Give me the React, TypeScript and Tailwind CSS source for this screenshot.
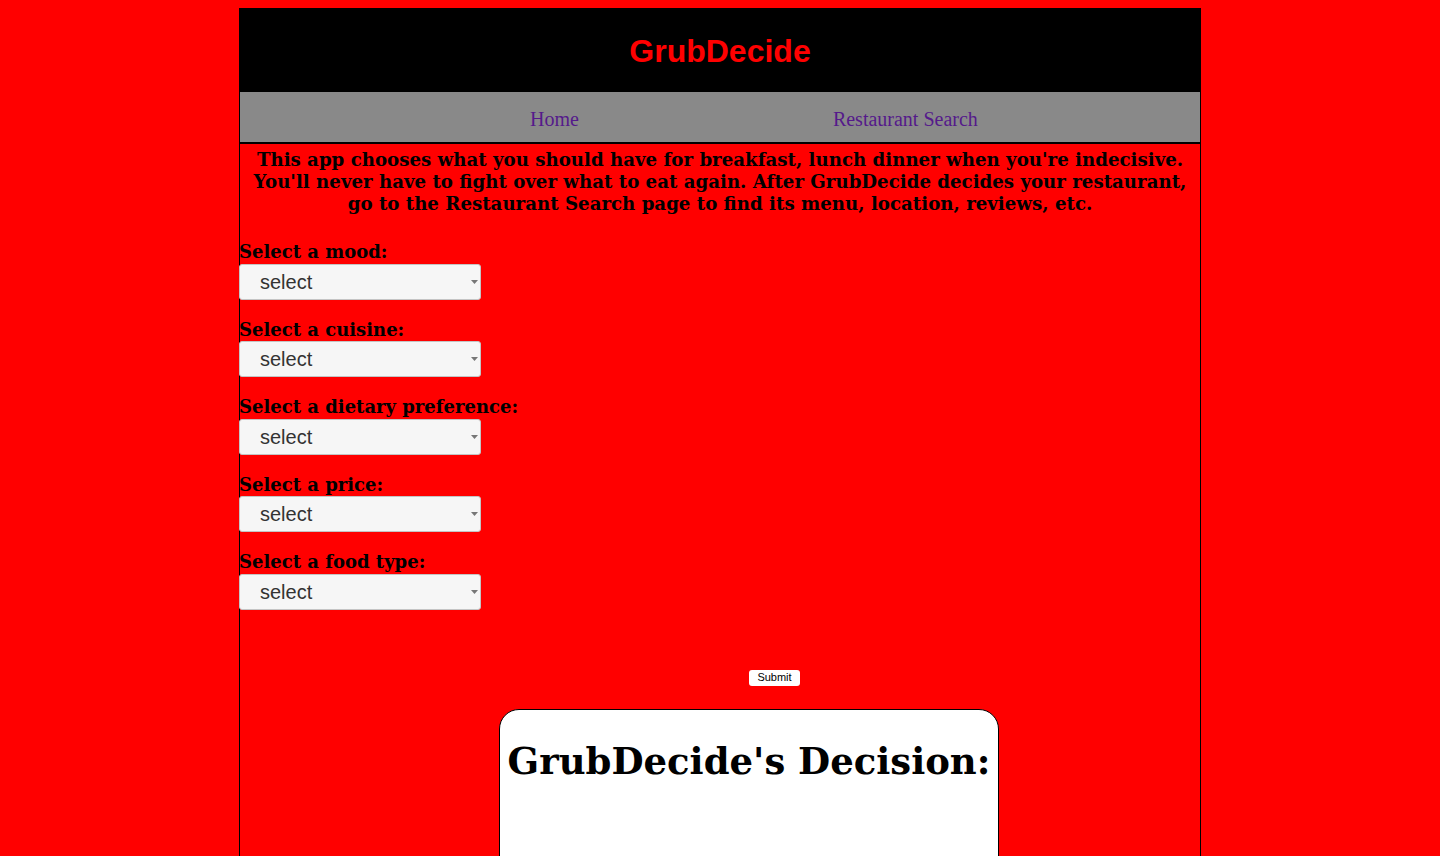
import { useState } from "react";

/* ───────────────── Data ───────────────── */

const fields = [
  { id: "mood", label: "Select a mood:" },
  { id: "cuisine", label: "Select a cuisine:" },
  { id: "diet", label: "Select a dietary preference:" },
  { id: "price", label: "Select a price:" },
  { id: "type", label: "Select a food type:" },
];

const serif = "font-['Liberation_Serif','Times_New_Roman',serif]";
const bold = "font-['DejaVu_Serif',Georgia,serif]";
const sans = "font-['Liberation_Sans',Arial,sans-serif]";

/* ───────────────── Pieces ───────────────── */

function Dropdown({ id }: { id: string }) {
  const [value, setValue] = useState("select");

  return (
    <div className="relative w-[242px] h-[36px]">
      <select
        id={id}
        value={value}
        onChange={(e) => setValue(e.target.value)}
        className={`${sans} appearance-none w-full h-full rounded-[3px] border border-[#c4c4c4] bg-[#f6f6f6] pl-[20px] text-[20px] text-[#333] outline-none`}
      >
        <option value="select">select</option>
      </select>
      <svg
        className="absolute right-[3px] top-[16px] pointer-events-none"
        width="7"
        height="4"
        viewBox="0 0 7 4"
      >
        <path d="M0 0h7L3.5 4z" fill="#777" />
      </svg>
    </div>
  );
}

/* ───────────────── Component ───────────────── */

export default function App() {
  return (
    <div className="min-h-screen bg-[#ff0000] pt-2">
      <div className="mx-auto w-[962px] border border-black">
        <header className="h-[83px] bg-black flex items-center justify-center">
          <h1 className={`${sans} text-[32px] font-bold text-[#ff0000] leading-none`}>
            GrubDecide
          </h1>
        </header>

        <nav className="h-[52px] bg-[#898989] border-b-2 border-black flex items-center pt-[4px] pl-[290px] gap-[254px]">
          <a href="#" className={`${serif} text-[20px] text-[#551a8b]`}>
            Home
          </a>
          <a href="#" className={`${serif} text-[20px] text-[#551a8b]`}>
            Restaurant Search
          </a>
        </nav>

        <p className={`${bold} pt-[5px] text-center text-[18.2px] leading-[22px] font-bold text-black`}>
          This app chooses what you should have for breakfast, lunch dinner when you're indecisive.
          <br />
          You'll never have to fight over what to eat again. After GrubDecide decides your restaurant,
          <br />
          go to the Restaurant Search page to find its menu, location, reviews, etc.
        </p>

        <form className="-ml-px mt-[26px] flex flex-col gap-[19px]">
          {fields.map((f) => (
            <div key={f.id}>
              <label
                htmlFor={f.id}
                className={`${bold} block text-[18px] leading-[22.5px] font-bold text-black`}
              >
                {f.label}
              </label>
              <Dropdown id={f.id} />
            </div>
          ))}
        </form>

        <div className="flex justify-center pl-[109px] mt-[60px]">
          <button
            type="button"
            className={`${sans} w-[51px] h-[16px] rounded-[3px] bg-white text-[11px] leading-none text-black`}
          >
            Submit
          </button>
        </div>

        <div className="ml-[259px] mt-[23px] w-[500px] h-[240px] rounded-[20px] border border-black bg-white">
          <h2 className={`${bold} pt-[25px] text-center text-[37px] leading-[52px] font-bold text-black`}>
            GrubDecide's Decision:
          </h2>
        </div>
      </div>
    </div>
  );
}
